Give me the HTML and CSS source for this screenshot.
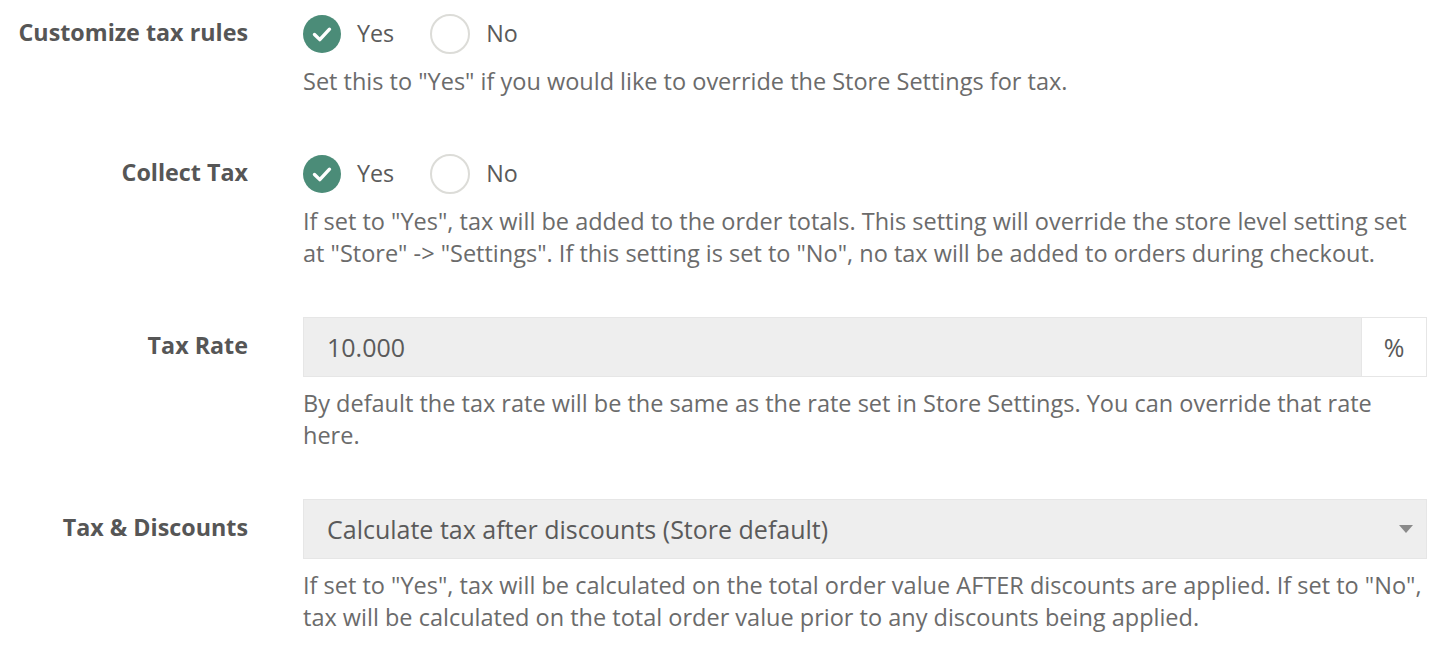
FILE: index.html
```html
<!DOCTYPE html>
<html lang="en">
<head>
<meta charset="utf-8">
<title>Tax settings</title>
<link rel="stylesheet" href="styles.css">
</head>
<body>
<form class="settings">
  <div class="row">
    <div class="label">Customize tax rules</div>
    <div class="field">
      <div class="radios">
        <span class="radio checked"><svg viewBox="0 0 38 38" width="38" height="38"><circle cx="19" cy="19" r="19" fill="#4b8c78"/><path d="M11.5 19.5 L16.8 24.6 L26.5 14.2" fill="none" stroke="#fff" stroke-width="3.4" stroke-linecap="round" stroke-linejoin="round"/></svg><span class="opt">Yes</span></span>
        <span class="radio"><span class="circle"></span><span class="opt">No</span></span>
      </div>
      <p class="help">Set this to "Yes" if you would like to override the Store Settings for tax.</p>
    </div>
  </div>
  <div class="row">
    <div class="label">Collect Tax</div>
    <div class="field">
      <div class="radios">
        <span class="radio checked"><svg viewBox="0 0 38 38" width="38" height="38"><circle cx="19" cy="19" r="19" fill="#4b8c78"/><path d="M11.5 19.5 L16.8 24.6 L26.5 14.2" fill="none" stroke="#fff" stroke-width="3.4" stroke-linecap="round" stroke-linejoin="round"/></svg><span class="opt">Yes</span></span>
        <span class="radio"><span class="circle"></span><span class="opt">No</span></span>
      </div>
      <p class="help">If set to "Yes", tax will be added to the order totals. This setting will override the store level setting set at "Store" -&gt; "Settings". If this setting is set to "No", no tax will be added to orders during checkout.</p>
    </div>
  </div>
  <div class="row">
    <div class="label">Tax Rate</div>
    <div class="field">
      <div class="input-group">
        <div class="input">10.000</div>
        <div class="addon">%</div>
      </div>
      <p class="help">By default the tax rate will be the same as the rate set in Store Settings. You can override that rate here.</p>
    </div>
  </div>
  <div class="row">
    <div class="label">Tax &amp; Discounts</div>
    <div class="field">
      <div class="select">
        <span>Calculate tax after discounts (Store default)</span>
        <svg class="caret" viewBox="0 0 14 8" width="14" height="8"><path d="M0 0 H14 L7 8 Z" fill="#8a8a8a"/></svg>
      </div>
      <p class="help">If set to "Yes", tax will be calculated on the total order value AFTER discounts are applied. If set to "No", tax will be calculated on the total order value prior to any discounts being applied.</p>
    </div>
  </div>
</form>
</body>
</html>
```

FILE: styles.css
```css
* { box-sizing: border-box; }
html, body { margin: 0; padding: 0; background: #fff; }
body {
  font-family: "Open Sans", "Noto Sans", sans-serif;
  color: #666;
  font-size: 23.3px;
}
.settings {
  padding: 5px 17px 0 0;
  display: flex;
  flex-direction: column;
  gap: 48px;
}
.row {
  display: grid;
  grid-template-columns: 248px 1fr;
  column-gap: 55px;
}
.label {
  text-align: right;
  font-weight: 700;
  color: #565656;
  line-height: 38px;
  padding-top: 9px;
  white-space: nowrap;
}
.row:nth-child(-n+2) .label { padding-top: 8px; }
.field { min-width: 0; }
.radios {
  display: flex;
  align-items: center;
  gap: 36px;
  padding-top: 10px;
  height: 48px;
}
.radio {
  display: inline-flex;
  align-items: center;
  gap: 16px;
  color: #5a5a5a;
}
.radio svg { display: block; }
.circle {
  width: 40px;
  height: 40px;
  border: 2px solid #dcdcd8;
  border-radius: 50%;
  display: block;
}
.opt { line-height: 38px; margin-top: -3px; }
.help {
  margin: 12px 0 0;
  line-height: 32px;
  font-size: 23.5px;
  color: #6b6b6b;
}
.input-group + .help,
.select + .help { margin-top: 10px; }
.input-group {
  display: flex;
  height: 60px;
  font-size: 25px;
}
.input {
  flex: 1;
  background: #eee;
  border: 1px solid #e6e6e6;
  border-right: 0;
  padding-left: 23px;
  display: flex;
  align-items: center;
  color: #5a5a5a;
}
.addon {
  width: 66px;
  border: 1px solid #e6e6e6;
  background: #fff;
  display: flex;
  align-items: center;
  justify-content: center;
  color: #5a5a5a;
}
.select {
  height: 60px;
  background: #eee;
  border: 1px solid #e6e6e6;
  padding: 0 13px 0 23px;
  display: flex;
  align-items: center;
  justify-content: space-between;
  color: #5a5a5a;
  font-size: 25px;
}
.caret { display: block; }
```
